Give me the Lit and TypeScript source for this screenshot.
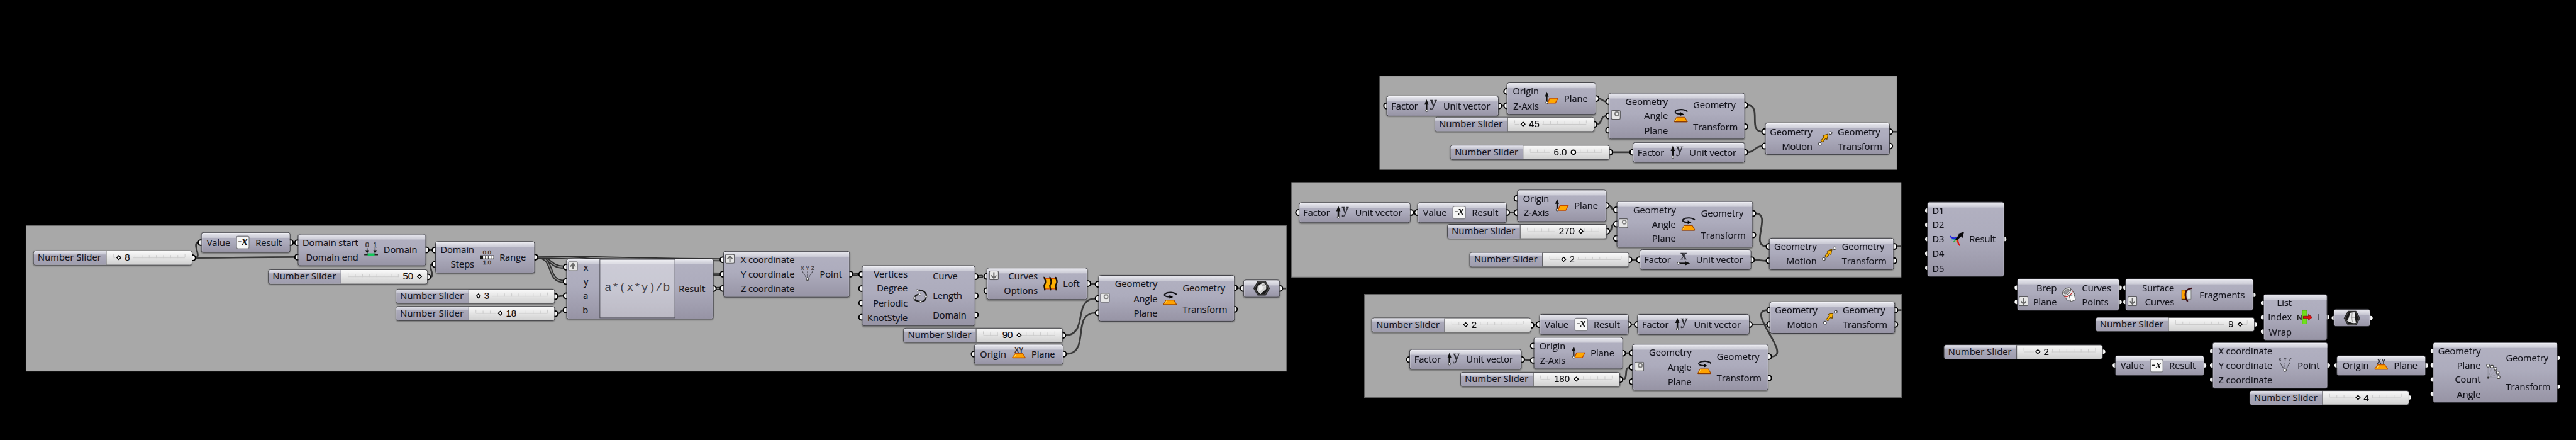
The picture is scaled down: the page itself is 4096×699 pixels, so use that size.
import { LitElement, css, html, svg, nothing } from 'lit'
import { customElement, property } from 'lit/decorators.js'

const CANVAS_W = 4498
const CANVAS_H = 768
const ROW_H = 25
const PAD = 3
const BORDER = 1.5
const SLIDER_W = 278.5
const SLIDER_H = 26

type Badge = { row: number, kind: 'graft' | 'flatten' | 'degrees' }

interface Comp {
  id: string
  x: number
  y: number
  w: number
  type: string
  badge?: Badge
}

interface Slider {
  id: string
  x: number
  y: number
  value: string
  knob: number
  before?: boolean
  round?: boolean
}

interface CompType {
  ins: string[]
  outs: string[]
  // right edge of the input labels
  edge: number
  icon: string
  h?: number
}

const types: Record<string, CompType> = {
  negative: { ins: ['Value'], outs: ['Result'], edge: 51.7, icon: 'negative' },
  domain: { ins: ['Domain start', 'Domain end'], outs: ['Domain'], edge: 106.5, icon: 'domain' },
  range: { ins: ['Domain', 'Steps'], outs: ['Range'], edge: 69, icon: 'range' },
  expression: { ins: ['x', 'y', 'a', 'b'], outs: ['Result'], edge: 39, icon: '' },
  point: { ins: ['X coordinate', 'Y coordinate', 'Z coordinate'], outs: ['Point'], edge: 125.5, icon: 'xyz' },
  pointNarrow: { ins: ['X coordinate', 'Y coordinate', 'Z coordinate'], outs: ['Point'], edge: 105.5, icon: 'xyz' },
  nurbs: { ins: ['Vertices', 'Degree', 'Periodic', 'KnotStyle'], outs: ['Curve', 'Length', 'Domain'], edge: 80.7, icon: 'nurbs' },
  loft: { ins: ['Curves', 'Options'], outs: ['Loft'], edge: 89.3, icon: 'loft' },
  xyPlane: { ins: ['Origin'], outs: ['Plane'], edge: 56.4, icon: 'xyPlane' },
  rotate: { ins: ['Geometry', 'Angle', 'Plane'], outs: ['Geometry', 'Transform'], edge: 104, icon: 'rotate' },
  unitY: { ins: ['Factor'], outs: ['Unit vector'], edge: 55.4, icon: 'unitY' },
  unitX: { ins: ['Factor'], outs: ['Unit vector'], edge: 55.4, icon: 'unitX' },
  normal: { ins: ['Origin', 'Z-Axis'], outs: ['Plane'], edge: 56.6, icon: 'normal' },
  move: { ins: ['Geometry', 'Motion'], outs: ['Geometry', 'Transform'], edge: 83.8, icon: 'move' },
  merge: { ins: ['D1', 'D2', 'D3', 'D4', 'D5'], outs: ['Result'], edge: 30, icon: 'merge' },
  section: { ins: ['Brep', 'Plane'], outs: ['Curves', 'Points'], edge: 70.4, icon: 'section' },
  split: { ins: ['Surface', 'Curves'], outs: ['Fragments'], edge: 85.8, icon: 'split' },
  item: { ins: ['List', 'Index', 'Wrap'], outs: ['i'], edge: 50.7, icon: 'item' },
  polar: { ins: ['Geometry', 'Plane', 'Count', 'Angle'], outs: ['Geometry', 'Transform'], edge: 84.2, icon: 'polar' },
  geoParam: { ins: [''], outs: [''], edge: 0, icon: 'hexGeometry', h: 31 },
  surfaceParam: { ins: [''], outs: [''], edge: 0, icon: 'hexSurface', h: 31 },
}

const groups = [
  { x: 45.4, y: 392.7, w: 2201.3, h: 255 },
  { x: 2255, y: 317.5, w: 1064.8, h: 166.2 },
  { x: 2408.7, y: 131.7, w: 904, h: 164.3 },
  { x: 2382.3, y: 513.3, w: 938.7, h: 181 },
]

const comps: Comp[] = [
  { id: 'neg1', type: 'negative', x: 351, y: 405.3, w: 156 },
  { id: 'domain', type: 'domain', x: 519.7, y: 408, w: 224.3 },
  { id: 'range', type: 'range', x: 759.6, y: 420.7, w: 174.7 },
  { id: 'expr', type: 'expression', x: 988.6, y: 450.5, w: 257, badge: { row: 0, kind: 'graft' } },
  { id: 'point', type: 'point', x: 1262.5, y: 437.7, w: 221.7, badge: { row: 0, kind: 'graft' } },
  { id: 'nurbs', type: 'nurbs', x: 1504.7, y: 463, w: 198.3 },
  { id: 'loft', type: 'loft', x: 1723.3, y: 466.7, w: 176, badge: { row: 0, kind: 'flatten' } },
  { id: 'xy1', type: 'xyPlane', x: 1701, y: 599.5, w: 156 },
  { id: 'rot1', type: 'rotate', x: 1917.5, y: 480.3, w: 238, badge: { row: 1, kind: 'degrees' } },
  { id: 'geo', type: 'geoParam', x: 2171, y: 487.7, w: 63.7 },

  { id: 'unit3', type: 'unitY', x: 2421.3, y: 166.7, w: 195.7 },
  { id: 'normal3', type: 'normal', x: 2631, y: 144, w: 156 },
  { id: 'rot3', type: 'rotate', x: 2809, y: 161.7, w: 238, badge: { row: 1, kind: 'degrees' } },
  { id: 'unit3b', type: 'unitY', x: 2851.2, y: 247.7, w: 195.7 },
  { id: 'move3', type: 'move', x: 3081.5, y: 214.3, w: 218.2 },

  { id: 'unit2', type: 'unitY', x: 2267.5, y: 352.7, w: 195.7 },
  { id: 'neg2', type: 'negative', x: 2475, y: 352.7, w: 156 },
  { id: 'normal2', type: 'normal', x: 2649, y: 330.5, w: 156 },
  { id: 'rot2', type: 'rotate', x: 2822.8, y: 350.5, w: 238, badge: { row: 1, kind: 'degrees' } },
  { id: 'unit2b', type: 'unitX', x: 2862.7, y: 435.3, w: 195.7 },
  { id: 'move2', type: 'move', x: 3089, y: 414.5, w: 218.2 },

  { id: 'neg4', type: 'negative', x: 2687.5, y: 548.2, w: 156 },
  { id: 'unit4', type: 'unitY', x: 2461.3, y: 609.2, w: 195.7 },
  { id: 'normal4', type: 'normal', x: 2677.5, y: 588.2, w: 156 },
  { id: 'unit4b', type: 'unitY', x: 2859, y: 548.2, w: 195.7 },
  { id: 'rot4', type: 'rotate', x: 2850.3, y: 600.3, w: 238, badge: { row: 1, kind: 'degrees' } },
  { id: 'move4', type: 'move', x: 3090.3, y: 525.5, w: 218.4 },

  { id: 'merge', type: 'merge', x: 3365.3, y: 351.7, w: 134.5 },
  { id: 'section', type: 'section', x: 3521.6, y: 486.4, w: 179.6, badge: { row: 1, kind: 'flatten' } },
  { id: 'split', type: 'split', x: 3711.3, y: 486.4, w: 223.6, badge: { row: 1, kind: 'flatten' } },
  { id: 'neg5', type: 'negative', x: 3692.8, y: 619.5, w: 156 },
  { id: 'point5', type: 'pointNarrow', x: 3862.8, y: 596.9, w: 202 },
  { id: 'item', type: 'item', x: 3951.6, y: 512.9, w: 112 },
  { id: 'surf', type: 'surfaceParam', x: 4075.3, y: 539.2, w: 64 },
  { id: 'xy5', type: 'xyPlane', x: 4080.2, y: 619.5, w: 156 },
  { id: 'polar', type: 'polar', x: 4248, y: 596.7, w: 218.3 },
]

const sliders: Slider[] = [
  { id: 's8', x: 57.9, y: 436.8, value: '8', knob: 150.4 },
  { id: 's50', x: 468.2, y: 470.2, value: '50', knob: 265, before: true },
  { id: 's3', x: 690.8, y: 504.2, value: '3', knob: 145 },
  { id: 's18', x: 690.8, y: 534.3, value: '18', knob: 183.2 },
  { id: 's90', x: 1577.3, y: 572, value: '90', knob: 202.7, before: true },
  { id: 's45', x: 2505, y: 204, value: '45', knob: 155.3 },
  { id: 's6', x: 2532.3, y: 252.6, value: '6.0', knob: 215.3, before: true, round: true },
  { id: 's270', x: 2527, y: 390.5, value: '270', knob: 234.3, before: true },
  { id: 's2', x: 2566, y: 440.2, value: '2', knob: 165 },
  { id: 's2b', x: 2395, y: 554.3, value: '2', knob: 165 },
  { id: 's180', x: 2550, y: 649.2, value: '180', knob: 202.7, before: true },
  { id: 's9', x: 3658.8, y: 553, value: '9', knob: 253, before: true },
  { id: 's2c', x: 3393.9, y: 600.5, value: '2', knob: 165 },
  { id: 's4', x: 3928, y: 680.5, value: '4', knob: 190 },
]

// [source, output, target, input, kind]
const wires: [string, number, string, number, ('list' | 'tree')?][] = [
  ['s8', 0, 'neg1', 0],
  ['s8', 0, 'domain', 1],
  ['neg1', 0, 'domain', 0],
  ['domain', 0, 'range', 0],
  ['s50', 0, 'range', 1],
  ['range', 0, 'expr', 0, 'list'],
  ['range', 0, 'expr', 1, 'list'],
  ['range', 0, 'point', 0, 'list'],
  ['range', 0, 'point', 1, 'list'],
  ['s3', 0, 'expr', 2],
  ['s18', 0, 'expr', 3],
  ['expr', 0, 'point', 2, 'list'],
  ['point', 0, 'nurbs', 0, 'tree'],
  ['nurbs', 0, 'loft', 0, 'tree'],
  ['loft', 0, 'rot1', 0],
  ['s90', 0, 'rot1', 1],
  ['xy1', 0, 'rot1', 2],
  ['rot1', 0, 'geo', 0],
  ['unit3', 0, 'normal3', 1],
  ['normal3', 0, 'rot3', 0],
  ['s45', 0, 'rot3', 1],
  ['s6', 0, 'unit3b', 0],
  ['rot3', 0, 'move3', 0],
  ['unit3b', 0, 'move3', 1],
  ['unit2', 0, 'neg2', 0],
  ['neg2', 0, 'normal2', 1],
  ['normal2', 0, 'rot2', 0],
  ['s270', 0, 'rot2', 1],
  ['s2', 0, 'unit2b', 0],
  ['rot2', 0, 'move2', 0],
  ['unit2b', 0, 'move2', 1],
  ['s2b', 0, 'neg4', 0],
  ['neg4', 0, 'unit4b', 0],
  ['unit4', 0, 'normal4', 1],
  ['normal4', 0, 'rot4', 0],
  ['s180', 0, 'rot4', 1],
  ['rot4', 0, 'move4', 0],
  ['unit4b', 0, 'move4', 1],
]

// wires that leave a group and vanish on the black canvas
const tails: [string, number][] = [['geo', 2246], ['move3', 3312], ['move2', 3319], ['move4', 3320.5]]

function heightOf(t: CompType) {
  const rows = Math.max(t.ins.length, t.outs.length)
  return t.h ?? (rows === 1 ? 36 : rows * ROW_H + 2 * PAD)
}

function portY(y: number, h: number, count: number, i: number) {
  return y + PAD + (h - 2 * PAD) * (i + 0.5) / count
}

function outPort(id: string, i: number) {
  const s = sliders.find(s => s.id === id)
  if (s) return { x: s.x + SLIDER_W, y: s.y + SLIDER_H / 2 }
  const c = comps.find(c => c.id === id)!
  const t = types[c.type]
  return { x: c.x + c.w, y: portY(c.y, heightOf(t), t.outs.length, i) }
}

function inPort(id: string, i: number) {
  const c = comps.find(c => c.id === id)!
  const t = types[c.type]
  return { x: c.x, y: portY(c.y, heightOf(t), t.ins.length, i) }
}

const trapezoid = svg`
  <path d="M5 14.5h14l4.5 8H.5z" fill="#ffa200" stroke="#a04a00" stroke-width="1.3" stroke-linejoin="round"/>
  <path d="M2.5 21l3.5-5.5" stroke="#ffd84a" stroke-width="1.2"/>
  <path d="M1 22.8h22" stroke="#8a3a00" stroke-width="1.4"/>`

const hexagon = svg`
  <path d="M8 0h14l7.5 13-7.5 13H8L.5 13z" fill="#2b2b2b"/>
  <path d="M9 2h12l6 11-6 11H9L3 13z" fill="#1b1b1b" stroke="#666" stroke-width=".8"/>`

const icons: Record<string, unknown> = {
  negative: svg`
    <rect x="1" y="1" width="22" height="22" rx="3" fill="#f6f6f6" stroke="#85858c" stroke-width="1.6"/>
    <text x="11.8" y="16" text-anchor="middle" font-family="Liberation Serif" font-size="20" font-weight="bold" font-style="italic" fill="#151515">-x</text>`,
  domain: svg`
    <g font-family="Liberation Sans" font-size="12" fill="#3c3c40" stroke="#3c3c40" stroke-width=".5" text-anchor="middle">
      <text x="5" y="8">0</text><text x="19" y="8">1</text>
    </g>
    <path d="M5 9v12M19 9v12M0 20.5h24" stroke="#222" stroke-width="1.6"/>
    <path d="M1.8 12.5h6.4L5 18zM15.8 12.5h6.4L19 18z" fill="#111"/>
    <path d="M6 18h12v5H6z" fill="#12c85a"/>`,
  range: svg`
    <g font-family="Liberation Sans" font-size="10.4" fill="#2c2c30" stroke="#2c2c30" stroke-width=".5" text-anchor="middle">
      <text x="12.5" y="6.8">0.0</text><text x="12.5" y="24">1.0</text>
    </g>
    <rect x="0" y="8.5" width="24.8" height="7" fill="#111"/>
    <path d="M5.5 10h3.6v4H5.5zM10.4 10H14v4h-3.6zM15 10h3.6v4H15zM20 10h3.6v4H20z" fill="#fff"/>`,
  xyz: svg`
    <g font-family="Liberation Sans" font-size="9.2" font-weight="bold" fill="#4c4c55" text-anchor="middle">
      <text x="3" y="5.5">X</text><text x="12.2" y="5.5">Y</text><text x="21.2" y="5.5">Z</text>
    </g>
    <path d="M3 7.5l7 11M12 7.5v11M21 7.5l-7 11" stroke="#55555e" stroke-width="1.5" stroke-dasharray="3.4 .8"/>
    <circle cx="12" cy="20.8" r="2.3" fill="#fff" stroke="#444" stroke-width="1.3"/>`,
  nurbs: svg`
    <path d="M7 2.5C15 .5 24 6 22.5 14.5c-1 6-6 8.5-10.500 7.500C6 21 1 20 1.500 16 2 12 7 9 11.500 9.500" fill="none" stroke="#1a1a1a" stroke-width="2.400"/>
    <g fill="#fff" stroke="#555" stroke-width=".9">
      <circle cx="7" cy="2.5" r="1.9"/><circle cx="22" cy="13.5" r="1.9"/><circle cx="12.5" cy="22" r="1.9"/>
      <circle cx="2" cy="16" r="1.9"/><circle cx="11" cy="9.5" r="1.9"/>
    </g>`,
  loft: svg`
    <path d="M2 3h20v18H2z" fill="#ffb000"/>
    <path d="M2 3.2h20M2 21h20" stroke="#d04a00" stroke-width="1.4"/>
    <g fill="none" stroke="#1a0e00" stroke-width="2.5">
      <path d="M1.5 0c-1 3 3 5 2 9.500s-3 4-2 8l1.200 6"/>
      <path d="M11.5 0c-1 3 3 5 2 9.500s-3 4-2 8l1.200 6"/>
      <path d="M21.5 0c-1 3 3 5 2 9.500s-3 4-2 8l1.200 6"/>
    </g>`,
  xyPlane: svg`
    <text x="12.2" y="8.5" text-anchor="middle" font-family="Liberation Sans" font-size="12.5" font-weight="bold" fill="#33333a" textLength="15.5" lengthAdjust="spacingAndGlyphs">XY</text>
    <path d="M6 10.5h12.5l5 7.5H.5z" fill="#ffa200" stroke="#c05500" stroke-width="1.2" stroke-linejoin="round"/>
    <path d="M1 18.3h22.5" stroke="#a04400" stroke-width="1.5"/>
    <path d="M4 16.5l3.5-4.5" stroke="#ffe060" stroke-width="1.3"/>`,
  rotate: svg`
    ${trapezoid}
    <path d="M23.5 5C20 .5 8 0 3.500 3.500.5 6 3 8.800 12 9" fill="none" stroke="#15151a" stroke-width="2.300"/>
    <path d="M11 5.500l6.500 3.800-6.500 2.800z" fill="#000"/>`,
  unitY: svg`
    <path d="M5 6v13" stroke="#111" stroke-width="2.8"/>
    <path d="M1.3 9.500L5 .5l3.700 9z" fill="#111"/>
    <circle cx="5" cy="20" r="2" fill="#fff" stroke="#333" stroke-width="1"/>
    <text x="17" y="13" text-anchor="middle" font-family="Liberation Serif" font-size="24" fill="#2c2c33" stroke="#2c2c33" stroke-width=".5">y</text>`,
  unitX: svg`
    <text x="12" y="11.5" text-anchor="middle" font-family="Liberation Serif" font-size="23" fill="#2c2c33" stroke="#2c2c33" stroke-width=".5">x</text>
    <path d="M3 18.500h15" stroke="#111" stroke-width="2.400"/>
    <path d="M15 15l8 3.500-8 3.500z" fill="#111"/>
    <circle cx="3" cy="18.500" r="2" fill="#fff" stroke="#333" stroke-width="1"/>`,
  normal: svg`
    <path d="M9 11.500h14.500L19 20H5.500z" fill="#ffa800" stroke="#c04a00" stroke-width="1.400" stroke-linejoin="round"/>
    <path d="M4 6v12" stroke="#111" stroke-width="2.400"/>
    <path d="M.6 8.500L4 0l3.400 8.500z" fill="#111"/>
    <circle cx="4" cy="19" r="2" fill="#fff" stroke="#333" stroke-width="1"/>`,
  move: svg`
    <path d="M4.500 15.500l6-7L8 6.800 17 4l-1.800 9.200-2.400-1.700-5 6.500z" fill="#ffb400" stroke="#6e4a00" stroke-width="1.200" stroke-linejoin="round"/>
    <circle cx="21.500" cy="2" r="2.500" fill="#fff" stroke="#444" stroke-width="1.200"/>
    <circle cx="2.800" cy="21" r="2.500" fill="#fff" stroke="#444" stroke-width="1.200"/>`,
  merge: svg`
    <path d="M0 7c4 4 8 4 12 3" fill="none" stroke="#2222dd" stroke-width="2.400"/>
    <path d="M1.500 14c4 0 7-1 11-4" fill="none" stroke="#18a0b0" stroke-width="1.400"/>
    <path d="M5 18c3-2 6-5 8-8" fill="none" stroke="#20b040" stroke-width="1.400"/>
    <path d="M10 18c1-3 2-5 3-8" fill="none" stroke="#c8a040" stroke-width="1.200"/>
    <path d="M17.500 23.500C13 19 13 14 14 10" fill="none" stroke="#e01818" stroke-width="2.600"/>
    <path d="M8.500 12.500l7.500-8-3-1.500L24.500-.5 22 10l-2.500-2.500L12.500 14z" fill="#08080a"/>`,
  section: svg`
    <g transform="rotate(-38 12 12)">
      <path d="M3.500 5v11c0 6 17 6 17 0V5" fill="#e9e9ec" stroke="#555" stroke-width="1.100"/>
      <ellipse cx="12" cy="5" rx="8.500" ry="5" fill="#ddd" stroke="#555" stroke-width="1.100"/>
      <ellipse cx="12" cy="5" rx="5.500" ry="3" fill="#98989c" stroke="#666" stroke-width=".8"/>
      <path d="M3.500 9c1 6 16 6 17 0" fill="none" stroke="#c02020" stroke-width="1.300"/>
    </g>
    <path d="M12 14l9-2 2 9-8 3z" fill="#fafafa" stroke="#555" stroke-width="1"/>`,
  split: svg`
    <path d="M3 4h7v16H3z" fill="#ffa200" stroke="#5a3000" stroke-width="1.300"/>
    <path d="M12 4h7v16h-7z" fill="#dfe6ea" stroke="#777" stroke-width="1"/>
    <path d="M20.500.8C6 2 7 15 13 24" fill="none" stroke="#3a0c14" stroke-width="2.600"/>`,
  item: svg`
    <text x="3.400" y="16.500" text-anchor="middle" font-family="Liberation Sans" font-size="12.500" font-weight="bold" fill="#222">N</text>
    <path d="M8 0h8.500v24H8z" fill="#6fe01c" stroke="#2f7a10" stroke-width="1.200"/>
    <path d="M10 10.500h9V7.500l6.500 5-6.500 5v-3h-9z" fill="#e01010" stroke="#7a0808" stroke-width=".9"/>`,
  polar: svg`
    <path d="M2.500 21V4M2.500 21L9 5M2.500 21L15 9M2.500 21L19 15M2.500 21h18" stroke="#8a8a94" stroke-width=".8"/>
    <path d="M.8 21h3.400M2.500 19.300v3.400" stroke="#222" stroke-width="1.300"/>
    <g fill="#fff" stroke="#444" stroke-width="1.300">
      <circle cx="2.500" cy="0" r="2.500"/><circle cx="9.500" cy="1.500" r="2.500"/><circle cx="15.500" cy="5.500" r="2.500"/>
      <circle cx="19.500" cy="12" r="2.500"/><circle cx="21" cy="20" r="2.500"/>
    </g>`,
  hexGeometry: svg`
    ${hexagon}
    <path d="M8.500 9.500L17 3.500l5.500 4v6.500L13 22.500 7.500 17z" fill="#cfcfcf" stroke="#f4f4f4" stroke-width=".8"/>
    <path d="M10 9.500l7-4.500v9l-6 5z" fill="#f4f4f4" opacity=".8"/>
    <ellipse cx="18.500" cy="7.500" rx="3.400" ry="2.800" fill="#b5b5b5" stroke="#eee" stroke-width=".8"/>`,
  hexSurface: svg`
    ${hexagon}
    <path d="M12 4l8-1c-1 6-.5 11 1.500 18-4 1-9.500-.5-14.500-3.500 2.500-4 4-8 5-13.500z" fill="#e8e8e8" stroke="#fff" stroke-width=".7"/>
    <path d="M11 10.500c3 1.500 6 1.500 9 1M15.500 4c-1 5-1 11 .5 16" fill="none" stroke="#8a8a8a" stroke-width=".9"/>`,
}

const badgeIcons: Record<string, unknown> = {
  graft: svg`<path d="M8.500 14V5M4 9l4.500-5L13 9" fill="none" stroke="#6a6a6a" stroke-width="2.200"/>`,
  flatten: svg`<path d="M8.500 3v9.500M4 8.500l4.500 5 4.500-5" fill="none" stroke="#6a6a6a" stroke-width="2.200"/>`,
  degrees: svg`<circle cx="10.300" cy="6.500" r="3.300" fill="#eee" stroke="#808080" stroke-width="2"/>`,
}

const shell = css`
  :host {
    display: block;
    font-family: 'Open Sans', 'Noto Sans', sans-serif;
    font-size: 16px;
    line-height: 24px;
    color: #12121a;
    -webkit-text-stroke: 0.2px #12121a;
    white-space: nowrap;
  }
`

@customElement('gh-component')
export class GhComponent extends LitElement {
  @property({ attribute: false })
  comp!: Comp

  static styles = [shell, css`
    .body {
      display: flex;
      box-sizing: border-box;
      height: 100%;
      padding: 1.5px 0;
      border: 1.5px solid #36363c;
      border-radius: 5px;
      background:
        linear-gradient(#e9e9ef, #c9c9d4) 0 0 / 100% 9px no-repeat,
        linear-gradient(#b2b1c1, #adacbd 45%, #9794a5);
      box-shadow: inset 0 1px 0 #f6f6fa, inset 1px 0 0 #ffffff50, inset -1px 0 0 #ffffff30, 0 1px 2px #00000050;
      position: relative;
    }

    .col {
      display: flex;
      flex-direction: column;
    }

    .row {
      flex: 1;
      display: flex;
      align-items: center;
    }

    .ins .row {
      justify-content: flex-end;
    }

    .icon {
      align-self: center;
      width: 24px;
      height: 24px;
      margin: 0 10px;
      overflow: visible;
      flex: none;
      -webkit-text-stroke: 0;
    }

    .formula {
      box-sizing: border-box;
      width: 132px;
      margin: -1px 6px -1px 20px;
      border: 1.3px solid #3c3c46;
      background: #ffffff58;
      display: flex;
      align-items: center;
      justify-content: center;
      font-family: 'Liberation Mono', monospace;
      font-size: 20.5px;
      letter-spacing: 0.45px;
      -webkit-text-stroke: 0;
      color: #44444c;
      padding-bottom: 3px;
    }

    .param {
      justify-content: center;
      align-items: center;
    }

    .hex {
      width: 30px;
      height: 26px;
    }

    .badge {
      position: absolute;
      left: 2.5px;
      width: 17px;
      height: 17px;
    }
  `]

  render() {
    const { type, badge } = this.comp
    const t = types[type]
    if (t.icon.startsWith('hex')) {
      return html`<div class="body param"><svg class="hex" viewBox="0 0 30 26">${icons[t.icon]}</svg></div>`
    }
    return html`
      <div class="body">
        <div class="col ins" style="width: ${t.edge - BORDER}px">
          ${t.ins.map(label => html`<div class="row">${label}</div>`)}
        </div>
        ${type === 'expression'
          ? html`<div class="formula">a*(x*y)/b</div>`
          : html`<svg class="icon" viewBox="0 0 24 24">${icons[t.icon]}</svg>`}
        <div class="col">
          ${t.outs.map(label => html`<div class="row">${label}</div>`)}
        </div>
        ${badge ? html`
          <svg class="badge" viewBox="0 0 17 17" style="top: ${badge.row * ROW_H + 4.5}px">
            <rect x=".7" y=".7" width="15.6" height="15.6" rx="2" fill="#e6e6e6" stroke="#5c5c60" stroke-width="1.3"/>
            ${badgeIcons[badge.kind]}
          </svg>
        ` : nothing}
      </div>
    `
  }
}

@customElement('gh-slider')
export class GhSlider extends LitElement {
  @property({ attribute: false })
  slider!: Slider

  static styles = [shell, css`
    .body {
      display: flex;
      box-sizing: border-box;
      height: 100%;
      border: 1.5px solid #404044;
      border-radius: 5px;
      overflow: hidden;
      position: relative;
      background: linear-gradient(#fafafa, #e6e6e6 45%, #d0d0d0);
      box-shadow: 0 1px 2px #00000050;
    }

    .name {
      box-sizing: border-box;
      width: 127px;
      padding-left: 7px;
      border-right: 1.3px solid #404044;
      line-height: 22px;
      letter-spacing: 0.2px;
      background:
        linear-gradient(#e4e4ec, #c4c4d0) 0 0 / 100% 6px no-repeat,
        linear-gradient(#b0afbf, #9f9dae);
    }

    .track {
      width: 127px;
      height: 8px;
      margin: 5px 0 0 11px;
    }

    .knob {
      position: absolute;
      top: 6px;
      width: 11px;
      height: 11px;
      margin-left: -7px;
    }

    .value {
      position: absolute;
      top: 0;
      line-height: 22px;
      font-family: 'Liberation Sans', sans-serif;
      font-size: 16.5px;
      color: #0c0c0c;
    }
  `]

  render() {
    const { value, knob, before, round } = this.slider
    const textW = value === '6.0' ? 23 : value.length * 9.2
    const textX = before ? knob - 11 - textW : knob + 10
    // the ruler fades out behind the number and the knob
    const gapFrom = Math.min(knob, textX) - 139.5 - 7
    const gapTo = Math.max(knob, textX + textW) - 139.5 + 5
    const ticks = Array.from({ length: 11 }, (_, i) => 1 + i * 12.5)
      .filter(x => x < gapFrom || x > gapTo)
    return html`
      <div class="body">
        <div class="name">Number Slider</div>
        <svg class="track" viewBox="0 0 127 8">
          ${ticks.map(x => svg`<path d="M${x} ${x === 1 || x === 126 ? 0 : 2}v5.5" stroke="#c8c8c8" stroke-width="1"/>`)}
          ${gapFrom > 1 ? svg`<path d="M1 7H${gapFrom}" stroke="#cbcbcb" stroke-width="1.1"/>` : nothing}
          ${gapTo < 126 ? svg`<path d="M${gapTo} 7H126" stroke="#cbcbcb" stroke-width="1.1"/>` : nothing}
        </svg>
        <svg class="knob" viewBox="0 0 11 11" style="left: ${knob}px">
          ${round
            ? svg`<circle cx="5.5" cy="5.5" r="3.7" fill="#fff" stroke="#000" stroke-width="2.2"/>`
            : svg`<path d="M5.500 2l3.500 3.500L5.500 9 2 5.500z" fill="#fff" stroke="#000" stroke-width="1.600"/>`}
        </svg>
        <div class="value" style="left: ${textX - BORDER}px">${value}</div>
      </div>
    `
  }
}

@customElement('app-root')
export class AppRoot extends LitElement {
  static styles = css`
    :host {
      display: block;
      width: 100vw;
      height: 100vh;
      overflow: hidden;
      background: #000;
    }

    .canvas {
      position: relative;
      width: 4498px;
      height: 768px;
      transform: scale(0.9106);
      transform-origin: 0 0;
    }

    .group {
      position: absolute;
      box-sizing: border-box;
      background: #a8a8a8;
      border: 1.3px solid #5c5c5c;
    }

    .wires {
      position: absolute;
      left: 0;
      top: 0;
    }

    .node {
      position: absolute;
    }
  `

  renderWire([from, out, to, input, kind]: typeof wires[number]) {
    const a = outPort(from, out)
    const b = inPort(to, input)
    const x1 = a.x + 4
    const x2 = b.x - (kind === 'tree' ? 9 : 4)
    const c = Math.hypot(x2 - x1, b.y - a.y) / 2
    const d = `M${x1} ${a.y}C${x1 + c} ${a.y} ${x2 - c} ${b.y} ${x2} ${b.y}`
    if (!kind) return svg`<path d=${d} stroke="#3a3a3a" stroke-width="3"/>`
    return svg`
      <path d=${d} stroke="#303030" stroke-width="5.5" stroke-linecap=${kind === 'tree' ? 'round' : 'butt'}/>
      <path d=${d} stroke="#8c8c8c" stroke-width="1.6"/>
    `
  }

  renderPorts() {
    const ports = [
      ...sliders.map(s => outPort(s.id, 0)),
      ...comps.flatMap(c => [
        ...types[c.type].ins.map((_, i) => inPort(c.id, i)),
        ...types[c.type].outs.map((_, i) => outPort(c.id, i)),
      ]),
    ]
    return ports.map(p => svg`<circle cx=${p.x} cy=${p.y} r="4.9" fill="#fff" stroke="#000" stroke-width="2.2"/>`)
  }

  render() {
    return html`
      <div class="canvas">
        ${groups.map(g => html`
          <div class="group" style="left: ${g.x}px; top: ${g.y}px; width: ${g.w}px; height: ${g.h}px"></div>
        `)}
        <svg class="wires" width=${CANVAS_W} height=${CANVAS_H} fill="none">
          ${tails.map(([id, x]) => {
            const p = outPort(id, 0)
            return svg`<path d="M${p.x} ${p.y}H${x}" stroke="#3a3a3a" stroke-width="3"/>`
          })}
          ${wires.map(w => this.renderWire(w))}
          ${this.renderPorts()}
        </svg>
        ${sliders.map(s => html`
          <gh-slider class="node" .slider=${s}
            style="left: ${s.x}px; top: ${s.y}px; width: ${SLIDER_W}px; height: ${SLIDER_H}px"></gh-slider>
        `)}
        ${comps.map(c => html`
          <gh-component class="node" .comp=${c}
            style="left: ${c.x}px; top: ${c.y}px; width: ${c.w}px; height: ${heightOf(types[c.type])}px"></gh-component>
        `)}
      </div>
    `
  }
}

declare global {
  interface HTMLElementTagNameMap {
    'app-root': AppRoot
    'gh-component': GhComponent
    'gh-slider': GhSlider
  }
}
